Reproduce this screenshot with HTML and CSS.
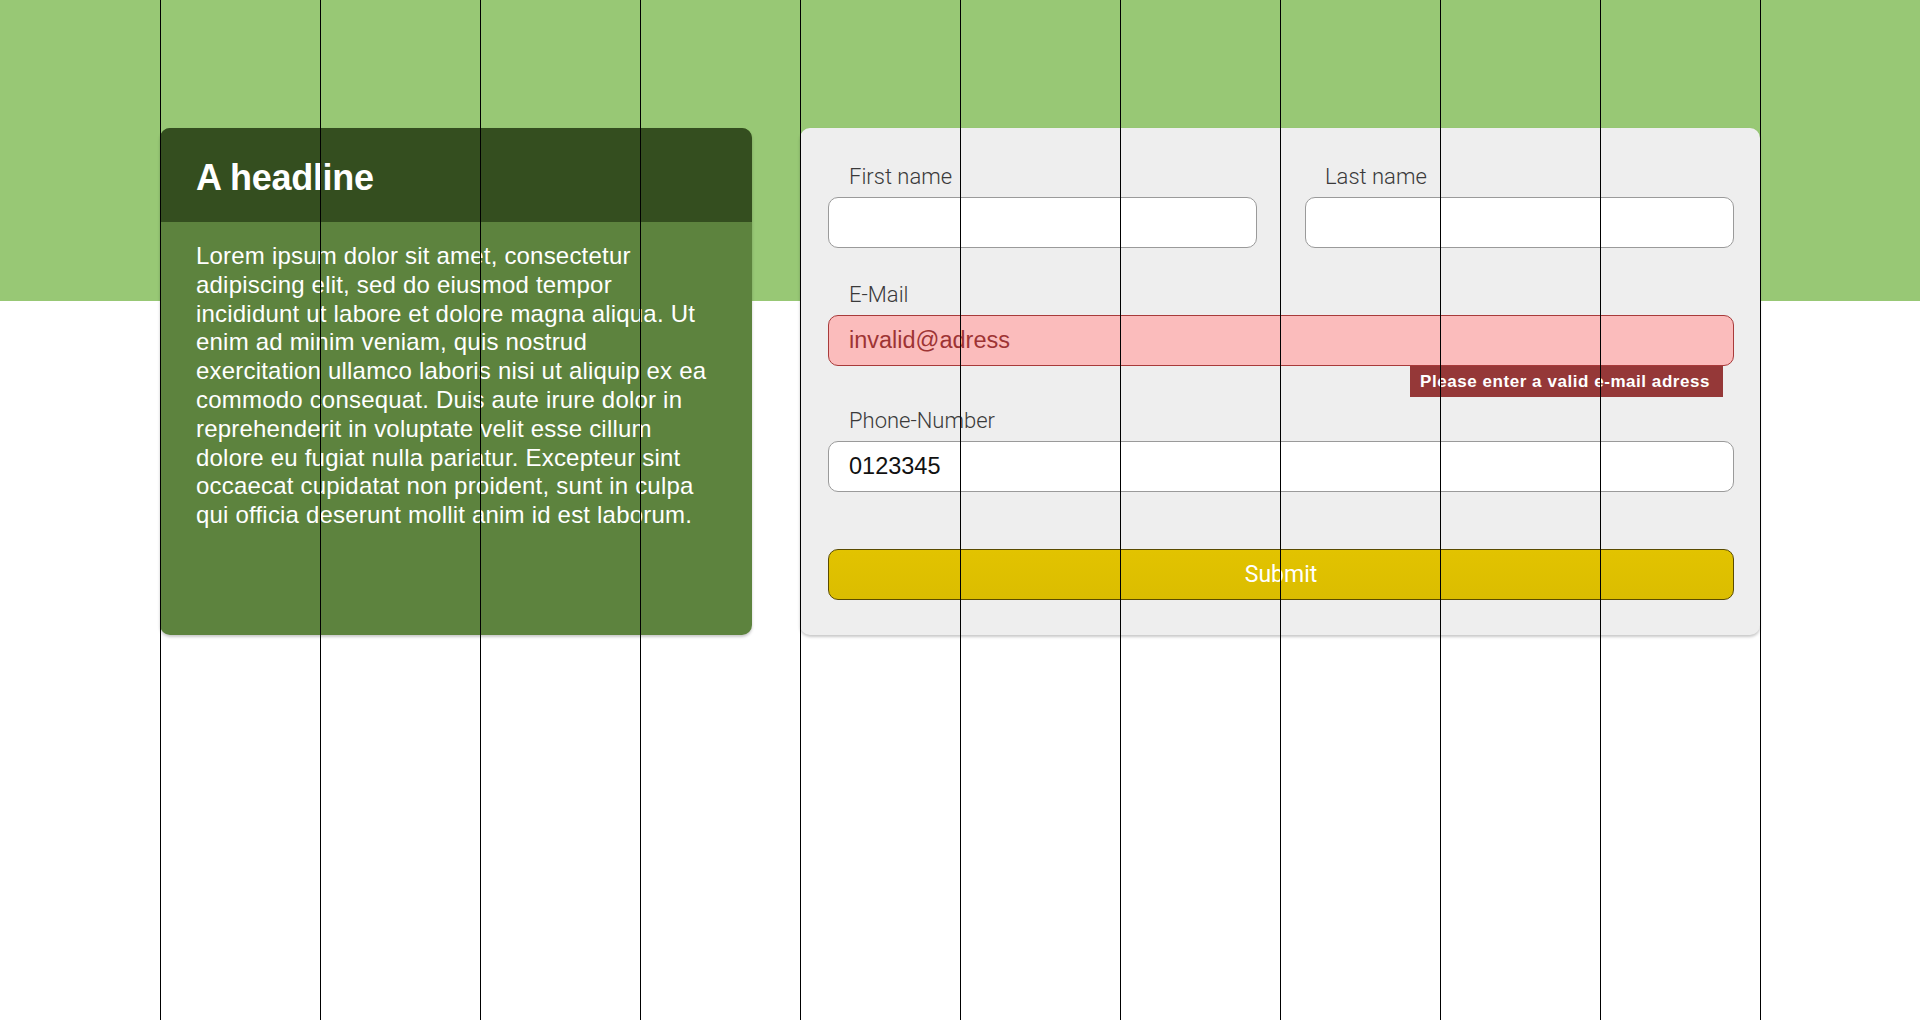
FILE: index.html
```html
<!DOCTYPE html>
<html lang="en">
<head>
<meta charset="utf-8">
<title>Form</title>
<link rel="stylesheet" href="styles.css">
</head>
<body>
<main class="page">
  <section class="info-card">
    <h1 class="info-title">A headline</h1>
    <p class="info-text">Lorem ipsum dolor sit amet, consectetur adipiscing elit, sed do eiusmod tempor incididunt ut labore et dolore magna aliqua. Ut enim ad minim veniam, quis nostrud exercitation ullamco laboris nisi ut aliquip ex ea commodo consequat. Duis aute irure dolor in reprehenderit in voluptate velit esse cillum dolore eu fugiat nulla pariatur. Excepteur sint occaecat cupidatat non proident, sunt in culpa qui officia deserunt mollit anim id est laborum.</p>
  </section>
  <form class="form-card">
    <div class="name-row">
      <div class="field">
        <label class="field-label" for="first">First name</label>
        <input class="field-input" id="first" type="text">
      </div>
      <div class="field">
        <label class="field-label field-label-alt" for="last">Last name</label>
        <input class="field-input" id="last" type="text">
      </div>
    </div>
    <div class="field field-email">
      <label class="field-label" for="email">E-Mail</label>
      <div class="input-wrap">
        <input class="field-input field-input-error" id="email" type="text" value="invalid@adress">
        <div class="error-tip">Please enter a valid e-mail adress</div>
      </div>
    </div>
    <div class="field field-phone">
      <label class="field-label" for="phone">Phone-Number</label>
      <input class="field-input" id="phone" type="text" value="0123345">
    </div>
    <button class="submit" type="button">Submit</button>
  </form>
</main>
<div class="grid-overlay">
  <div class="grid-line"></div><div class="grid-line"></div><div class="grid-line"></div><div class="grid-line"></div><div class="grid-line"></div><div class="grid-line"></div><div class="grid-line"></div><div class="grid-line"></div><div class="grid-line"></div><div class="grid-line"></div><div class="grid-line"></div>
</div>
</body>
</html>
```

FILE: styles.css
```css
* {
  box-sizing: border-box;
}

html, body {
  margin: 0;
  padding: 0;
}

body {
  position: relative;
  min-height: 1020px;
  font-family: "Liberation Sans", Arial, sans-serif;
  background: linear-gradient(to bottom, #98c875 0, #98c875 301px, #ffffff 301px, #ffffff 100%) no-repeat;
  background-color: #ffffff;
}

.page {
  display: flex;
  align-items: stretch;
  gap: 48px;
  padding: 128px 160px 0 160px;
  width: 1920px;
}

/* Left info card */
.info-card {
  flex: 0 0 592px;
  display: flex;
  flex-direction: column;
  background: #5d833e;
  border-radius: 10px;
  box-shadow: 0 2px 3px rgba(0, 0, 0, 0.22);
  overflow: hidden;
}

.info-title {
  margin: 0;
  padding: 28px 36px 23px 36px;
  background: #344e1f;
  color: #ffffff;
  font-size: 36px;
  line-height: 43px;
  font-weight: bold;
  letter-spacing: -0.3px;
}

.info-text {
  margin: 0;
  padding: 20px 36px 20px 36px;
  color: #ffffff;
  font-size: 24px;
  line-height: 28.8px;
  letter-spacing: 0.2px;
}

/* Form card */
.form-card {
  flex: 1 1 auto;
  display: flex;
  flex-direction: column;
  background: #eeeeee;
  border-radius: 10px;
  box-shadow: 0 2px 3px rgba(0, 0, 0, 0.22);
  padding: 36px 26px 35px 28px;
}

.name-row {
  display: grid;
  grid-template-columns: 1fr 1fr;
  column-gap: 48px;
}

.field {
  display: flex;
  flex-direction: column;
}

.field-email {
  margin-top: 34px;
}

.field-phone {
  margin-top: 42px;
}

.field-label {
  display: block;
  height: 26px;
  margin-bottom: 7px;
  padding-left: 21px;
  font-family: Roboto, "Liberation Sans", sans-serif;
  font-weight: 300;
  font-size: 22px;
  line-height: 26px;
  color: #3a3a3a;
}

.field-label-alt {
  padding-left: 20px;
}

.input-wrap {
  position: relative;
}

.field-input {
  display: block;
  width: 100%;
  height: 51px;
  margin: 0;
  padding: 0 20px;
  border: 1px solid #9a9a9a;
  border-radius: 10px;
  background: #ffffff;
  font-family: "Liberation Sans", Arial, sans-serif;
  font-size: 23.5px;
  color: #111111;
  outline: none;
}

.field-input-error {
  background: #fbbcbc;
  border-color: #a83a3a;
  color: #9e3434;
}

.error-tip {
  position: absolute;
  top: 100%;
  right: 11px;
  height: 31px;
  padding: 0 13px 0 10px;
  background: #953838;
  color: #ffffff;
  font-family: "Liberation Sans", Arial, sans-serif;
  font-weight: bold;
  font-size: 17px;
  line-height: 31px;
  letter-spacing: 0.55px;
  white-space: nowrap;
}

.submit {
  display: block;
  width: 100%;
  height: 51px;
  margin: 57px 0 0 0;
  padding: 0;
  border: 1px solid #5a4b00;
  border-radius: 10px;
  background: linear-gradient(to bottom, #e2c300, #dbbd00);
  color: #ffffff;
  font-family: Roboto, "Liberation Sans", sans-serif;
  font-weight: 400;
  font-size: 23px;
  line-height: 49px;
  text-align: center;
  cursor: pointer;
}

/* Column grid overlay */
.grid-overlay {
  position: absolute;
  top: 0;
  left: 0;
  right: 0;
  bottom: 0;
  display: flex;
  padding-left: 160px;
  pointer-events: none;
}

.grid-line {
  flex: 0 0 160px;
  height: 100%;
  border-left: 1px solid #000000;
}
```
